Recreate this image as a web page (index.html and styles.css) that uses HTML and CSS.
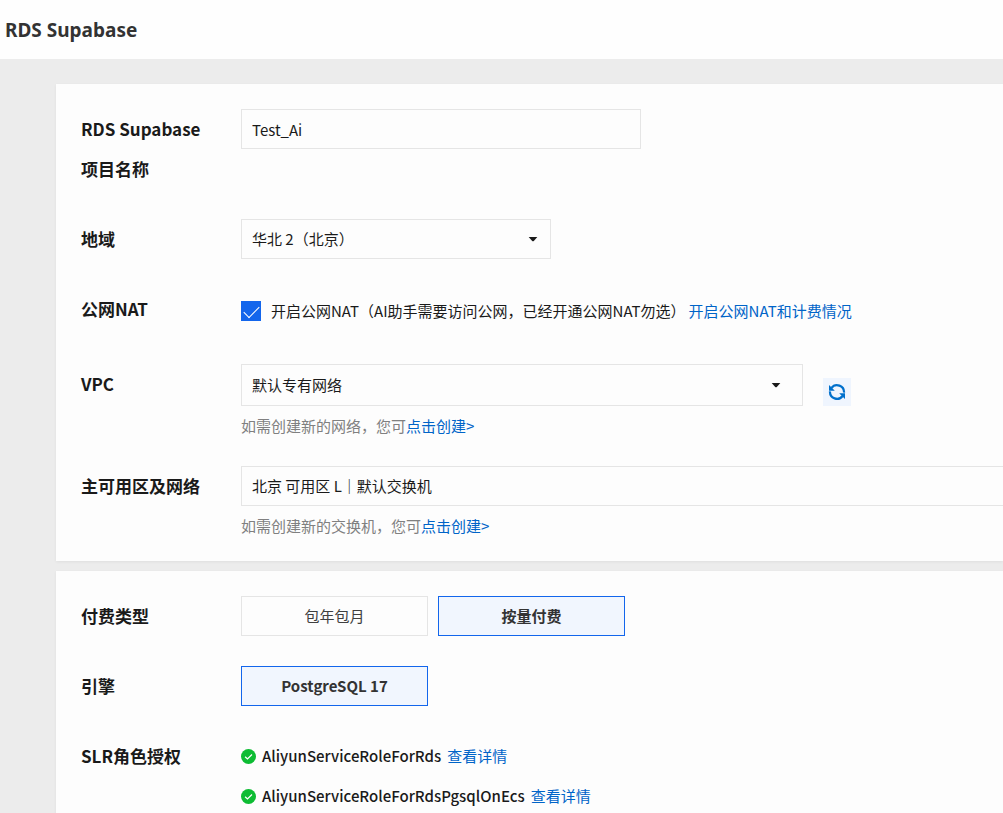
FILE: index.html
```html
<!DOCTYPE html>
<html lang="zh-CN">
<head>
<meta charset="utf-8">
<meta name="viewport" content="width=device-width, initial-scale=1">
<title>RDS Supabase</title>
<link rel="stylesheet" href="styles.css">
</head>
<body>
<header class="topbar"><h1 class="topbar-title">RDS Supabase</h1></header>
<main class="page">
  <section class="card">
    <div class="row">
      <label class="row-label" for="project">RDS Supabase 项目名称</label>
      <div class="row-body"><input class="control control-name" id="project" type="text" value="Test_Ai"></div>
    </div>
    <div class="row">
      <label class="row-label" for="region">地域</label>
      <div class="row-body">
        <div class="select select-region">
          <select class="control" id="region"><option>华北 2（北京）</option></select>
          <svg class="caret" viewBox="0 0 10 5" aria-hidden="true"><path d="M.7 0h8.6L5.8 4q-.8.7-1.6 0z"/></svg>
        </div>
      </div>
    </div>
    <div class="row row-nat">
      <span class="row-label">公网NAT</span>
      <div class="row-body nat">
        <input class="check" id="nat" type="checkbox" checked>
        <label for="nat">开启公网NAT（AI助手需要访问公网，已经开通公网NAT勿选）</label>
        <a class="link" href="#">开启公网NAT和计费情况</a>
      </div>
    </div>
    <div class="row">
      <label class="row-label" for="vpc">VPC</label>
      <div class="row-body">
        <div class="vpc">
          <div class="select select-vpc">
            <select class="control" id="vpc"><option>默认专有网络</option></select>
            <svg class="caret" viewBox="0 0 10 5" aria-hidden="true"><path d="M.7 0h8.6L5.8 4q-.8.7-1.6 0z"/></svg>
          </div>
          <button class="refresh" type="button" aria-label="刷新">
            <svg viewBox="0 0 18 18" aria-hidden="true">
              <path class="arc" d="M3.4 5A7 7 0 0 1 16 9.6M14.6 13A7 7 0 0 1 2 8.4"/>
              <path class="tip" d="M1 2v5.8h5.8zM17 16v-5.8h-5.8z"/>
            </svg>
          </button>
        </div>
        <p class="hint">如需创建新的网络，您可<a class="link" href="#">点击创建&gt;</a></p>
      </div>
    </div>
    <div class="row">
      <label class="row-label" for="zone">主可用区及网络</label>
      <div class="row-body">
        <select class="control control-zone" id="zone"><option>北京 可用区 L｜默认交换机</option></select>
        <p class="hint">如需创建新的交换机，您可<a class="link" href="#">点击创建&gt;</a></p>
      </div>
    </div>
  </section>
  <section class="card">
    <div class="row">
      <span class="row-label">付费类型</span>
      <div class="row-body options">
        <button class="option" type="button">包年包月</button>
        <button class="option option-active" type="button">按量付费</button>
      </div>
    </div>
    <div class="row">
      <span class="row-label">引擎</span>
      <div class="row-body options">
        <button class="option option-active" type="button">PostgreSQL 17</button>
      </div>
    </div>
    <div class="row">
      <span class="row-label">SLR角色授权</span>
      <ul class="row-body roles">
        <li class="role">
          <svg class="ok" viewBox="0 0 16 16" aria-hidden="true"><circle cx="8" cy="8" r="8"/><path d="M4.4 8.2l2.5 2.4 4.8-4.7"/></svg>
          <span class="role-name">AliyunServiceRoleForRds</span>
          <a class="link" href="#">查看详情</a>
        </li>
        <li class="role">
          <svg class="ok" viewBox="0 0 16 16" aria-hidden="true"><circle cx="8" cy="8" r="8"/><path d="M4.4 8.2l2.5 2.4 4.8-4.7"/></svg>
          <span class="role-name">AliyunServiceRoleForRdsPgsqlOnEcs</span>
          <a class="link" href="#">查看详情</a>
        </li>
      </ul>
    </div>
  </section>
</main>
</body>
</html>
```

FILE: styles.css
```css
* { box-sizing: border-box; }

body {
  display: flex;
  flex-direction: column;
  height: 100vh;
  margin: 0;
  overflow: hidden;
  background: #ececec;
  color: #1a1a1a;
  font: 15px/20px "Noto Sans CJK SC", sans-serif;
}

.topbar {
  flex: none;
  padding: 15px 5px 14px;
  background: #fefefe;
}

.topbar-title {
  margin: 0;
  color: #333;
  font: 700 19px/30px "Noto Sans", "Open Sans", sans-serif;
}

.page {
  display: flex;
  flex: 1;
  flex-direction: column;
  gap: 10px;
  min-height: 0;
  padding: 25px 0 0 56px;
  overflow: hidden;
}

.card {
  display: flex;
  flex: none;
  flex-direction: column;
  gap: 30px;
  padding: 25px 0 25px 25px;
  background: #fdfdfd;
  box-shadow: 0 1px 3px rgba(0, 0, 0, 0.06);
}

.row { display: flex; }

.row-nat { min-height: 45px; }

.row-label {
  flex: none;
  width: 160px;
  padding-right: 30px;
  font-size: 17px;
  font-weight: 700;
  line-height: 40px;
}

.row-body {
  flex: 1;
  min-width: 0;
}

.control {
  display: block;
  width: 100%;
  height: 40px;
  margin: 0;
  padding: 0 10px;
  border: 1px solid #e5e5e5;
  border-radius: 0;
  outline: 0;
  background: #fdfdfd;
  color: #1a1a1a;
  font: inherit;
  appearance: none;
}

.control-name { max-width: 400px; }

.control-zone { border-right: 0; }

.select { position: relative; }

.select-region { max-width: 310px; }

.select-vpc { flex: 0 1 562px; }

.select-vpc .control { height: 42px; }

.caret {
  position: absolute;
  top: 50%;
  right: 13px;
  width: 10px;
  height: 5px;
  margin-top: -2px;
  fill: #1a1a1a;
  pointer-events: none;
}

.select-vpc .caret {
  right: 22px;
}

.nat {
  display: flex;
  align-items: center;
  height: 44px;
}

.nat label { margin: 0 3px 0 10px; }

.check {
  flex: none;
  width: 20px;
  height: 20px;
  margin: 0;
  appearance: none;
  background: #1366ec;
}

.check::after {
  content: "";
  display: block;
  width: 14px;
  height: 7px;
  margin: 5px 0 0 3px;
  border: solid #fff;
  border-width: 0 0 1px 1px;
  transform: rotate(-45deg);
}

.link {
  color: #0064c8;
  text-decoration: none;
}

.vpc {
  display: flex;
  align-items: flex-end;
  gap: 20px;
}

.refresh {
  display: grid;
  place-items: center;
  width: 28px;
  height: 28px;
  padding: 0;
  border: 0;
  background: #eff5fe;
}

.refresh svg {
  width: 18px;
  height: 18px;
}

.arc {
  fill: none;
  stroke: #0070cc;
  stroke-width: 2.2;
}

.tip { fill: #0070cc; }

.hint {
  margin: 10px 0 0;
  color: #808080;
}

.options {
  display: flex;
  gap: 10px;
}

.option {
  width: 187px;
  height: 40px;
  padding: 0;
  border: 1px solid #e5e5e5;
  background: #fdfdfd;
  color: #404040;
  font: inherit;
}

.option-active {
  border-color: #1366ec;
  background: #f1f6fe;
  color: #333;
  font-weight: 700;
}

.roles {
  margin: 0;
  padding: 0;
  list-style: none;
}

.role {
  display: flex;
  align-items: center;
  gap: 6px;
  height: 40px;
}

.role-name { font-weight: 500; }

.ok {
  width: 15px;
  height: 15px;
  fill: #0dbc33;
}

.ok path {
  fill: none;
  stroke: #fff;
  stroke-width: 1.3;
}
```
